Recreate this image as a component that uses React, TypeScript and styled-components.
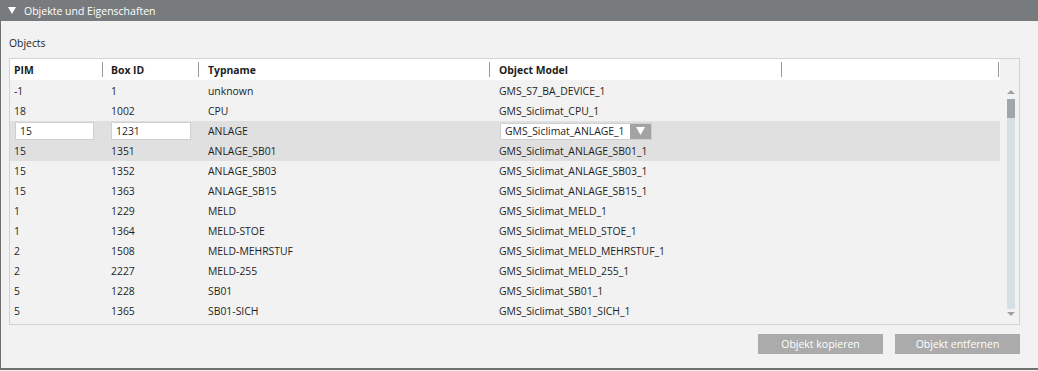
import React from "react";
import styled, { createGlobalStyle } from "styled-components";

const Global = createGlobalStyle`
  html, body { margin: 0; padding: 0; background: #f2f2f2; }
  body { font-family: "Open Sans", "Noto Sans", sans-serif; font-size: 10.4px; color: #1e1e1e; }
  * { box-sizing: border-box; }
`;

const Panel = styled.div`
  width: 1038px;
  height: 370px;
  border-left: 1px solid #707070;
  border-bottom: 2px solid #707070;
  background: #f2f2f2;
  display: flex;
  flex-direction: column;
`;

const TitleBar = styled.div`
  height: 21px;
  margin-left: -1px;
  background: #787b7d;
  color: #ffffff;
  display: flex;
  align-items: center;
  padding-left: 8px;
  gap: 8px;
  font-size: 10.5px;
`;

const Content = styled.div`
  padding: 0 0 0 8px;
  display: flex;
  flex-direction: column;
`;

const SectionLabel = styled.div`
  height: 37px;
  padding-top: 14px;
  line-height: 16px;
`;

const TableBox = styled.div`
  width: 1011px;
  height: 267px;
  border: 1px solid #d3d3d3;
  display: flex;
`;

const TableMain = styled.div`
  width: 990px;
  display: flex;
  flex-direction: column;
`;

const cols = "92px 96px 291px 292px 1fr";

const HeaderRow = styled.div`
  display: grid;
  grid-template-columns: ${cols};
  height: 21px;
  background: #ffffff;
  font-weight: 700;
  margin-bottom: 1px;
`;

const HeaderCell = styled.div<{ $pad: number; $sep?: boolean; $end?: boolean }>`
  position: relative;
  display: flex;
  align-items: center;
  padding-left: ${(p) => p.$pad}px;
  ${(p) =>
    p.$sep
      ? `&::before { content: ""; position: absolute; left: 0; top: 3px; height: 15px; width: 1px; background: #9a9a9a; }`
      : ""}
  ${(p) =>
    p.$end
      ? `&::after { content: ""; position: absolute; right: 1px; top: 3px; height: 15px; width: 1px; background: #9a9a9a; }`
      : ""}
`;

const Row = styled.div<{ $selected?: boolean }>`
  display: grid;
  grid-template-columns: ${cols};
  height: 20px;
  background: ${(p) => (p.$selected ? "#e0e0e0" : "transparent")};
`;

const Cell = styled.div<{ $pad: number }>`
  display: flex;
  align-items: center;
  padding-left: ${(p) => p.$pad}px;
  white-space: nowrap;
`;

const TextInput = styled.input<{ $w: number; $ml: number }>`
  width: ${(p) => p.$w}px;
  height: 18px;
  margin-left: ${(p) => p.$ml}px;
  border: 1px solid #cfcfcf;
  background: #fff;
  font: inherit;
  color: #1e1e1e;
  padding: 0 0 0 4px;
  outline: none;
`;

const Select = styled.div`
  width: 152px;
  height: 17px;
  margin-left: 1px;
  display: flex;
  border: 1px solid #cfcfcf;
  background: #fff;
`;

const SelectText = styled.div`
  flex: 1;
  display: flex;
  align-items: center;
  padding-left: 4px;
  overflow: hidden;
  white-space: nowrap;
`;

const SelectArrow = styled.div`
  width: 21px;
  background: #a3a3a3;
  display: flex;
  align-items: center;
  justify-content: center;
`;

const ScrollCol = styled.div`
  width: 8px;
  margin-left: 7px;
  margin-top: 28px;
  display: flex;
  flex-direction: column;
`;

const ScrollBtn = styled.div`
  height: 10px;
  display: flex;
  align-items: center;
  justify-content: center;
`;

const Thumb = styled.div`
  height: 19px;
  margin-top: 2px;
  background: #a0a6a9;
`;

const Track = styled.div`
  height: 191px;
  background: #d6e0e4;
`;

const Actions = styled.div`
  display: flex;
  justify-content: flex-end;
  gap: 12px;
  width: 1011px;
  margin-top: 9px;
`;

const Button = styled.button`
  width: 125px;
  height: 20px;
  border: none;
  background: #ababab;
  color: #ffffff;
  font: inherit;
  font-size: 10.5px;
  padding: 0;
  display: flex;
  align-items: center;
  justify-content: center;
`;

const Tri = ({ up, color, w, h }: { up?: boolean; color: string; w: number; h: number }) => (
  <svg width={w} height={h} viewBox={`0 0 ${w} ${h}`}>
    <polygon points={up ? `0,${h} ${w},${h} ${w / 2},0` : `0,0 ${w},0 ${w / 2},${h}`} fill={color} />
  </svg>
);

const rows: [string, string, string, string][] = [
  ["-1", "1", "unknown", "GMS_S7_BA_DEVICE_1"],
  ["18", "1002", "CPU", "GMS_Siclimat_CPU_1"],
  ["15", "1231", "ANLAGE", "GMS_Siclimat_ANLAGE_1"],
  ["15", "1351", "ANLAGE_SB01", "GMS_Siclimat_ANLAGE_SB01_1"],
  ["15", "1352", "ANLAGE_SB03", "GMS_Siclimat_ANLAGE_SB03_1"],
  ["15", "1363", "ANLAGE_SB15", "GMS_Siclimat_ANLAGE_SB15_1"],
  ["1", "1229", "MELD", "GMS_Siclimat_MELD_1"],
  ["1", "1364", "MELD-STOE", "GMS_Siclimat_MELD_STOE_1"],
  ["2", "1508", "MELD-MEHRSTUF", "GMS_Siclimat_MELD_MEHRSTUF_1"],
  ["2", "2227", "MELD-255", "GMS_Siclimat_MELD_255_1"],
  ["5", "1228", "SB01", "GMS_Siclimat_SB01_1"],
  ["5", "1365", "SB01-SICH", "GMS_Siclimat_SB01_SICH_1"],
];

export default function App() {
  return (
    <>
      <Global />
      <Panel>
        <TitleBar>
          <Tri color="#ffffff" w={8} h={7} />
          <span>Objekte und Eigenschaften</span>
        </TitleBar>
        <Content>
          <SectionLabel>Objects</SectionLabel>
          <TableBox>
            <TableMain>
              <HeaderRow>
                <HeaderCell $pad={4}>PIM</HeaderCell>
                <HeaderCell $pad={9} $sep>Box ID</HeaderCell>
                <HeaderCell $pad={10} $sep>Typname</HeaderCell>
                <HeaderCell $pad={10} $sep>Object Model</HeaderCell>
                <HeaderCell $pad={10} $sep $end />
              </HeaderRow>
              {rows.map((r, i) =>
                i === 2 ? (
                  <Row key={i} $selected>
                    <Cell $pad={0}>
                      <TextInput $w={79} $ml={5} defaultValue={r[0]} />
                    </Cell>
                    <Cell $pad={0}>
                      <TextInput $w={80} $ml={9} defaultValue={r[1]} />
                    </Cell>
                    <Cell $pad={10}>{r[2]}</Cell>
                    <Cell $pad={10}>
                      <Select>
                        <SelectText>{r[3]}</SelectText>
                        <SelectArrow>
                          <Tri color="#ffffff" w={9} h={8} />
                        </SelectArrow>
                      </Select>
                    </Cell>
                    <Cell $pad={0} />
                  </Row>
                ) : (
                  <Row key={i} $selected={i === 3}>
                    <Cell $pad={4}>{r[0]}</Cell>
                    <Cell $pad={9}>{r[1]}</Cell>
                    <Cell $pad={10}>{r[2]}</Cell>
                    <Cell $pad={10}>{r[3]}</Cell>
                    <Cell $pad={0} />
                  </Row>
                )
              )}
            </TableMain>
            <ScrollCol>
              <ScrollBtn>
                <Tri up color="#a0a0a0" w={8} h={4} />
              </ScrollBtn>
              <Thumb />
              <Track />
              <ScrollBtn>
                <Tri color="#a0a0a0" w={8} h={4} />
              </ScrollBtn>
            </ScrollCol>
          </TableBox>
          <Actions>
            <Button>Objekt kopieren</Button>
            <Button>Objekt entfernen</Button>
          </Actions>
        </Content>
      </Panel>
    </>
  );
}
